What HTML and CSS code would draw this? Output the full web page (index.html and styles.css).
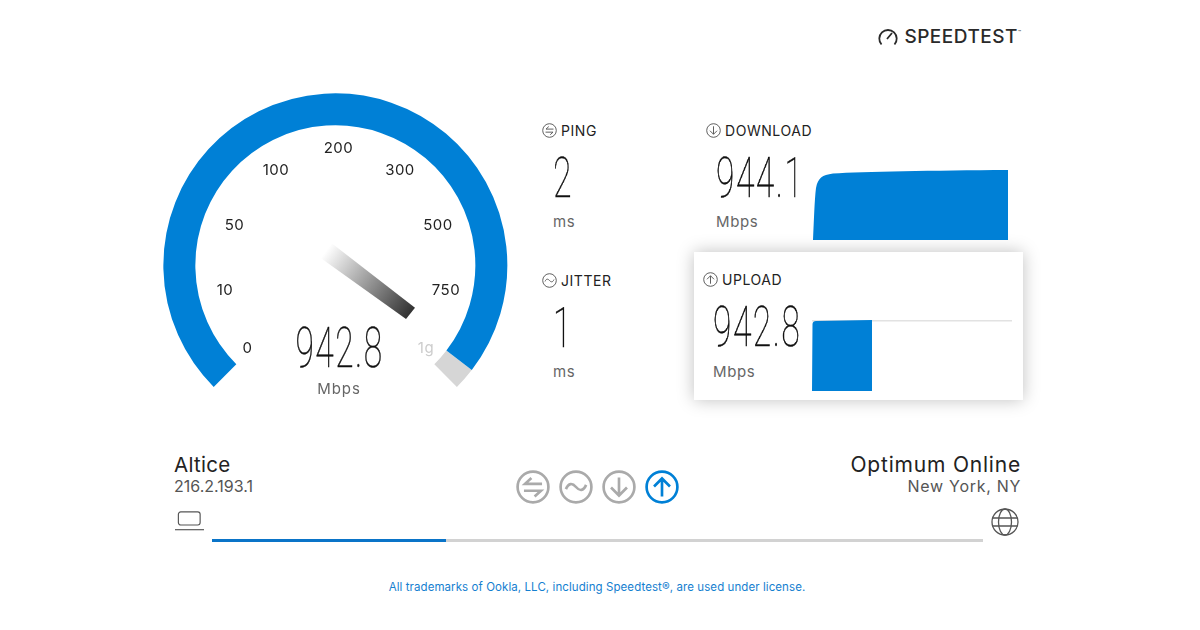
FILE: index.html
```html
<!DOCTYPE html>
<html lang="en">
<head>
<meta charset="utf-8">
<title>Speedtest</title>
<link rel="stylesheet" href="styles.css">
</head>
<body>
<svg class="defs" width="0" height="0" aria-hidden="true">
  <symbol id="i-ping" viewBox="0 0 32 32"><circle cx="16" cy="16" r="14.5"/><path d="M24.500 13H8.500L14.500 7.500M7.500 19.500H23.500L17.500 25"/></symbol>
  <symbol id="i-jitter" viewBox="0 0 32 32"><circle cx="16" cy="16" r="14.5"/><path d="M6.500 18C9 12 12.500 12 16 16S23 20 25.500 14"/></symbol>
  <symbol id="i-down" viewBox="0 0 32 32"><circle cx="16" cy="16" r="14.5"/><path d="M16 7V24M8.500 16.500L16 24L23.500 16.500"/></symbol>
  <symbol id="i-up" viewBox="0 0 32 32"><circle cx="16" cy="16" r="14.5"/><path d="M16 25V8M8.500 15.500L16 8L23.500 15.500"/></symbol>
</svg>
<div class="page">
  <header class="brand">
    <svg class="brand-icon" viewBox="0 0 20 18"><path d="M3.500 16.500A8.700 8.700 0 1 1 16.500 16.500M9 11L14 5"/></svg>
    <span class="brand-name">SPEEDTEST</span><span class="brand-tm">™</span>
  </header>

  <main class="results">
    <svg class="gauge" viewBox="163 93 345 320">
      <defs>
        <linearGradient id="needle" gradientUnits="userSpaceOnUse" x1="326" y1="251" x2="410" y2="313">
          <stop offset="0" stop-color="#fff"/>
          <stop offset="1" stop-color="#333"/>
        </linearGradient>
      </defs>
      <path class="arc-rest" d="M459.100 360.300A156 156 0 0 1 445.600 375.600"/>
      <path class="arc-fill" d="M225 375.600A156 156 0 1 1 459.100 360.300"/>
      <polygon fill="url(#needle)" points="331.700,243.300 415,307.700 406,319 321,258.300"/>
      <text class="tick" x="338.500" y="152.500">200</text>
      <text class="tick" x="276" y="174.500">100</text>
      <text class="tick" x="400" y="174.500">300</text>
      <text class="tick" x="234.500" y="230">50</text>
      <text class="tick" x="438" y="230">500</text>
      <text class="tick" x="225" y="295">10</text>
      <text class="tick" x="446" y="295">750</text>
      <text class="tick" x="247.500" y="352.500">0</text>
      <text class="tick tick-max" x="426" y="353">1g</text>
      <text class="gauge-value" transform="translate(339.500 367) scale(.6 1)">942.8</text>
      <text class="gauge-unit" x="339" y="394">Mbps</text>
    </svg>

    <section class="col-latency">
      <div class="metric">
        <h2 class="metric-label"><svg class="mini"><use href="#i-ping"/></svg>PING</h2>
        <div class="metric-text"><div class="value">2</div><div class="unit">ms</div></div>
      </div>
      <div class="metric">
        <h2 class="metric-label"><svg class="mini"><use href="#i-jitter"/></svg>JITTER</h2>
        <div class="metric-text"><div class="value">1</div><div class="unit">ms</div></div>
      </div>
    </section>

    <section class="col-speed">
      <div class="speed speed-down">
        <h2 class="metric-label"><svg class="mini"><use href="#i-down"/></svg>DOWNLOAD</h2>
        <div class="speed-body">
          <div class="metric-text"><div class="value">944.1</div><div class="unit">Mbps</div></div>
          <svg class="graph graph-down" viewBox="0 0 195 70"><path d="M0 70C1 50 1.500 30 3 18C5 8 9 5 20 3.500C50 1.500 120 .5 195 0V70Z"/></svg>
        </div>
      </div>
      <div class="speed speed-up">
        <h2 class="metric-label"><svg class="mini"><use href="#i-up"/></svg>UPLOAD</h2>
        <div class="speed-body">
          <div class="metric-text"><div class="value">942.8</div><div class="unit">Mbps</div></div>
          <svg class="graph graph-up" viewBox="0 0 200 71"><path class="graph-line" d="M0 .7H200"/><path d="M0 71L.5 4Q.7 1 4 1L60 0V71Z"/></svg>
        </div>
      </div>
    </section>
  </main>

  <section class="connection">
    <div class="endpoint">
      <div class="endpoint-name">Altice</div>
      <div class="endpoint-sub">216.2.193.1</div>
    </div>
    <div class="stages">
      <svg class="stage"><use href="#i-ping"/></svg>
      <svg class="stage"><use href="#i-jitter"/></svg>
      <svg class="stage"><use href="#i-down"/></svg>
      <svg class="stage stage-active"><use href="#i-up"/></svg>
    </div>
    <div class="endpoint endpoint-right">
      <div class="endpoint-name">Optimum Online</div>
      <div class="endpoint-sub">New York, NY</div>
    </div>
  </section>

  <section class="track">
    <svg class="laptop" viewBox="0 0 30 20"><rect x="3.500" y=".6" width="22.500" height="13.500" rx="2.500"/><path d="M0 19H30"/></svg>
    <div class="bar"><div class="bar-fill" style="width:30.4%"></div></div>
    <svg class="globe" viewBox="0 0 28 28"><circle cx="14" cy="14" r="13"/><ellipse cx="14" cy="14" rx="6.500" ry="13"/><path d="M1.500 10H26.500M1.500 18H26.500"/></svg>
  </section>

  <footer class="legal">All trademarks of Ookla, LLC, including Speedtest®, are used under license.</footer>
</div>
</body>
</html>
```
FILE: styles.css
```css
* { box-sizing: border-box; }
html, body { margin: 0; padding: 0; background: #fff; }
body { font-family: Inter, "Noto Sans", "Liberation Sans", sans-serif; color: #222; }
.defs { position: absolute; }
symbol circle, symbol path { fill: none; stroke: currentColor; }

.page { width: 1200px; height: 630px; display: flex; flex-direction: column; overflow: hidden; }

.brand { height: 93px; padding: 27px 179px 0 0; display: flex; justify-content: flex-end; align-items: flex-start; color: #2a2a2a; }
.brand-icon { width: 20px; height: 18px; margin: 1px 6px 0 0; fill: none; stroke: #2a2a2a; stroke-width: 1.800; }
.brand-name { font-size: 19px; line-height: 20px; font-weight: 500; letter-spacing: .5px; }
.brand-tm { font-size: 5px; line-height: 10px; }

.results { height: 320px; padding-left: 163px; display: flex; }
.gauge { width: 345px; height: 320px; flex: none; margin-right: 34px; will-change: transform; }
.arc-fill { fill: none; stroke: #0080d6; stroke-width: 32; }
.arc-rest { fill: none; stroke: #d6d6d6; stroke-width: 32; }
.tick { font-size: 15px; letter-spacing: .5px; fill: #222; text-anchor: middle; }
.tick-max { fill: #ccc; }
.gauge-value { font-family: Roboto, sans-serif; font-weight: 100; font-size: 56px; letter-spacing: 2.500px; fill: #111; stroke: #111; stroke-width: .5px; text-anchor: middle; }
.gauge-unit { font-size: 15px; letter-spacing: .9px; fill: #666; text-anchor: middle; }

.col-latency { width: 151.500px; flex: none; padding-top: 29px; }
.metric { height: 150px; }
.metric-label { margin: 0; height: 16px; display: flex; align-items: center; font-size: 14px; font-weight: 400; letter-spacing: .55px; color: #222; }
.mini { width: 15px; height: 15px; margin-right: 4px; flex: none; color: #555; stroke-width: 2; }
.metric-text { padding-left: 11px; }
.value { height: 56px; margin-top: 12px; font-family: Roboto, sans-serif; font-weight: 100; font-size: 56px; line-height: 56px; letter-spacing: 2.500px; -webkit-text-stroke: .5px #111; transform: scaleX(.6); transform-origin: left center; will-change: transform; white-space: nowrap; color: #111; }
.unit { height: 20px; font-size: 15px; line-height: 20px; letter-spacing: .6px; margin-top: 6px; color: #666; }

.col-speed { width: 329px; flex: none; padding-top: 29px; }
.speed-down { height: 130px; padding-left: 12.500px; }
.speed-body { display: flex; align-items: flex-start; }
.speed-body .metric-text { width: 107px; padding-left: 10px; flex: none; }
.graph { display: block; flex: none; }
.graph path { fill: #0080d6; }
.graph-down { width: 195px; height: 70px; margin-top: 32px; }
.speed-up { height: 148px; padding: 19px 0 0 9.500px; background: #fff; box-shadow: 0 0 16px rgba(0, 0, 0, .25); }
.speed-up .speed-body .metric-text { width: 110px; padding-left: 10px; }
.speed-up .unit { margin-top: 7px; }
.speed-up .graph-up { width: 200px; height: 71px; margin-top: 33px; overflow: visible; margin-left: -1px; }
.graph .graph-line { fill: none; stroke: #e2e2e2; stroke-width: 1.500; }

.connection { height: 76px; padding: 0 179px 0 174px; margin-top: 39px; display: grid; grid-template-columns: 1fr auto 1fr; align-items: start; }
.endpoint-name { font-size: 20.500px; line-height: 24px; margin-top: 1px; font-weight: 400; letter-spacing: .3px; color: #222; white-space: nowrap; }
.endpoint-sub { font-size: 16px; line-height: 20px; margin-top: -1px; color: #555; }
.endpoint-right .endpoint-name { font-size: 21px; letter-spacing: .8px; }
.endpoint-right { text-align: right; }
.endpoint-right .endpoint-sub { letter-spacing: .7px; }
.stages { display: flex; gap: 9px; margin-top: 18px; }
.stage { width: 34px; height: 34px; color: #aaa; stroke-width: 2.500; }
.stage-active { color: #0080d6; }

.track { height: 32px; margin-top: -18px; padding: 0 181px 0 175px; display: flex; align-items: flex-end; }
.laptop { width: 29px; height: 20px; margin-right: 8px; flex: none; fill: none; stroke: #555; stroke-width: 1.200; margin-bottom: 11px; }
.bar { flex: 1; height: 3px; background: #d2d2d2; }
.bar-fill { height: 100%; background: #0a74c8; }
.globe { width: 28px; height: 28px; margin-left: 8px; flex: none; fill: none; stroke: #555; stroke-width: 1.300; margin-bottom: 6px; }

.legal { margin-top: 38px; padding-right: 6px; text-align: center; font-size: 11.500px; letter-spacing: .08px; color: #1580d0; }
```
